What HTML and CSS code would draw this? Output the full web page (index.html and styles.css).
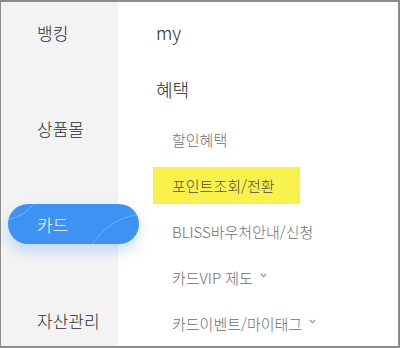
FILE: index.html
```html
<!DOCTYPE html>
<html lang="ko">
<head>
<meta charset="utf-8">
<link rel="stylesheet" href="styles.css">
</head>
<body>
<div class="frame">
  <nav class="side">
    <div class="side-item">뱅킹</div>
    <div class="side-item">상품몰</div>
    <div class="side-item active">카드</div>
    <div class="side-item">자산관리</div>
  </nav>
  <main class="content">
    <div class="head">my</div>
    <div class="head head2">혜택</div>
    <ul class="sub">
      <li class="sub-item">할인혜택</li>
      <li class="sub-item"><span class="mark">포인트조회/전환</span></li>
      <li class="sub-item">BLISS바우처안내/신청</li>
      <li class="sub-item">카드VIP 제도<svg class="chev" width="7" height="5" viewBox="0 0 7 5"><path d="M0.8 0.9 L3.5 3.6 L6.2 0.9" fill="none" stroke="#8a8a8a" stroke-width="1.1"/></svg></li>
      <li class="sub-item">카드이벤트/마이태그<svg class="chev" width="7" height="5" viewBox="0 0 7 5"><path d="M0.8 0.9 L3.5 3.6 L6.2 0.9" fill="none" stroke="#8a8a8a" stroke-width="1.1"/></svg></li>
    </ul>
  </main>
</div>
</body>
</html>
```

FILE: styles.css
```css
* { box-sizing: border-box; }
html, body { margin: 0; padding: 0; background: #fff; }
body { font-family: "Noto Sans CJK KR", "Noto Sans", sans-serif; font-weight: 300; }

.frame {
  width: 400px;
  height: 348px;
  border-style: solid;
  border-color: #8c8c8c;
  border-width: 2px 2px 2px 1px;
  display: flex;
  overflow: hidden;
}

.side {
  width: 117px;
  flex: none;
  background: #f3f3f3;
  display: flex;
  flex-direction: column;
  gap: 56px;
  padding-top: 10px;
  position: relative;
  z-index: 1;
}

.side-item {
  height: 40px;
  margin-left: 7px;
  padding-left: 29px;
  display: flex;
  align-items: center;
  font-size: 17px;
  color: #2a2a2a;
  white-space: nowrap;
}

.side-item.active {
  width: 131px;
  border-radius: 20px;
  background: #3d92f4;
  color: #fff;
  box-shadow: 0 7px 14px rgba(70, 145, 240, 0.28);
  position: relative;
  overflow: hidden;
}

.side-item.active::before,
.side-item.active::after {
  content: "";
  position: absolute;
  border-radius: 50%;
  border: 1px solid rgba(255, 255, 255, 0.28);
}

.side-item.active::before {
  width: 70px;
  height: 70px;
  left: -40px;
  top: -56px;
}

.side-item.active::after {
  width: 130px;
  height: 130px;
  left: 74px;
  top: 9px;
}

.content {
  flex: 1;
  padding-top: 10px;
  padding-left: 38px;
  display: flex;
  flex-direction: column;
}

.head {
  height: 40px;
  display: flex;
  align-items: center;
  font-size: 18px;
  color: #1e1e1e;
}

.head2 { margin-top: 18px; }

.sub {
  list-style: none;
  margin: 8px 0 0;
  padding: 0;
}

.sub-item {
  height: 46px;
  display: flex;
  align-items: center;
  padding-left: 16px;
  font-size: 15px;
  color: #6e6e6e;
  white-space: nowrap;
}

.mark {
  display: inline-flex;
  align-items: center;
  height: 35px;
  margin-left: -18px;
  padding: 0 24px 0 18px;
  background: #f9f24c;
  box-shadow: 0 0 0 1px #efe98e;
  color: #4a4a4a;
}

.chev { margin-left: 7px; margin-top: -3px; }
```
